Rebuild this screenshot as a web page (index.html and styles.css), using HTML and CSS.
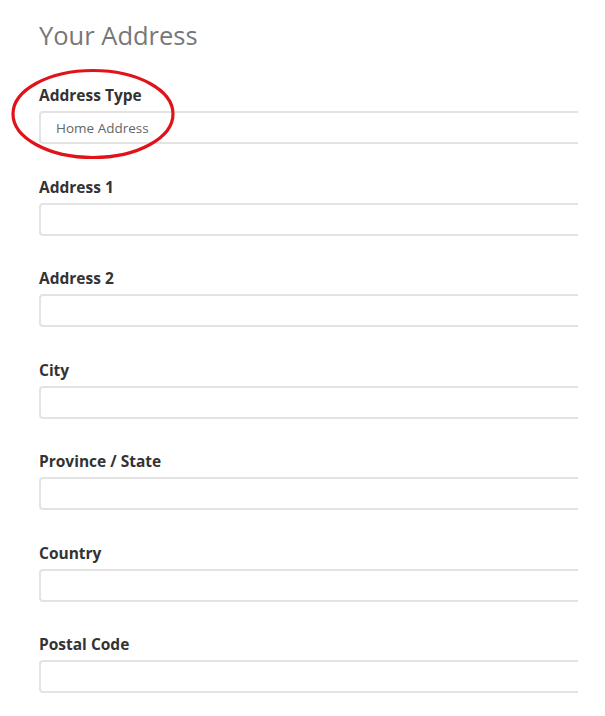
FILE: index.html
```html
<!DOCTYPE html>
<html lang="en">
<head>
<meta charset="utf-8">
<title>Your Address</title>
<link rel="stylesheet" href="styles.css">
</head>
<body>
<main class="page">
  <h1 class="title">Your Address</h1>
  <form class="form">
    <div class="field field-type">
      <label class="label">Address Type</label>
      <div class="input"><span class="value">Home Address</span></div>
      <svg class="mark" width="170" height="96" viewBox="0 0 170 96" aria-hidden="true">
        <ellipse cx="84" cy="47" rx="80" ry="43.5" fill="none" stroke="#e0131a" stroke-width="3.2"/>
      </svg>
    </div>
    <div class="field">
      <label class="label">Address 1</label>
      <div class="input"></div>
    </div>
    <div class="field">
      <label class="label">Address 2</label>
      <div class="input"></div>
    </div>
    <div class="field">
      <label class="label">City</label>
      <div class="input"></div>
    </div>
    <div class="field">
      <label class="label">Province / State</label>
      <div class="input"></div>
    </div>
    <div class="field">
      <label class="label">Country</label>
      <div class="input"></div>
    </div>
    <div class="field">
      <label class="label">Postal Code</label>
      <div class="input"></div>
    </div>
  </form>
</main>
</body>
</html>
```

FILE: styles.css
```css
html, body {
  margin: 0;
  padding: 0;
  background: #ffffff;
}

body {
  font-family: "Open Sans", "Liberation Sans", sans-serif;
  color: #333333;
}

.page {
  padding: 18px 0 0 39px;
}

.title {
  margin: 0 0 33px 0;
  font-size: 25.5px;
  line-height: 34px;
  font-weight: 400;
  color: #777777;
}

.form {
  display: flex;
  flex-direction: column;
  gap: 32.5px;
}

.field {
  position: relative;
  display: flex;
  flex-direction: column;
  gap: 6px;
}

.label {
  font-size: 15.5px;
  line-height: 20px;
  font-weight: 700;
  color: #333333;
}

.input {
  box-sizing: border-box;
  width: 539px;
  height: 33px;
  border: 2px solid #e3e3e3;
  border-right: none;
  border-radius: 4px 0 0 4px;
  background: #ffffff;
  display: flex;
  align-items: center;
  padding-left: 15px;
}

.value {
  font-size: 13.5px;
  color: #666666;
}

.mark {
  position: absolute;
  left: -30px;
  top: -18px;
  pointer-events: none;
}
```
